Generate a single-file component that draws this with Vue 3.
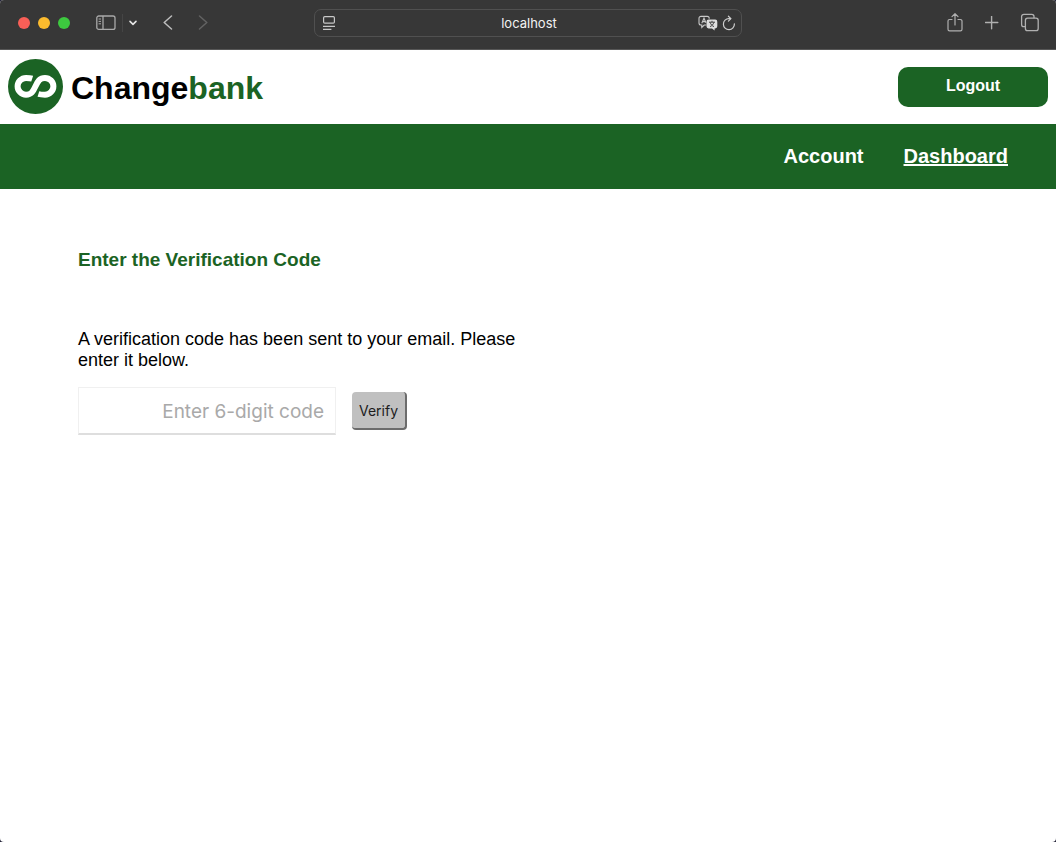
<script setup>
import { ref } from 'vue'

const code = ref('')
const links = [
  { label: 'Account', active: false },
  { label: 'Dashboard', active: true },
]
</script>

<template>
  <div class="window">
    <div class="toolbar">
      <div class="tools tools-left">
        <div class="lights">
          <span class="light close"></span>
          <span class="light minimize"></span>
          <span class="light zoom"></span>
        </div>
        <button class="icon sidebar" aria-label="Sidebar">
          <svg width="20" height="16" viewBox="0 0 20 16" fill="none" stroke="#a9a9a9" stroke-width="1.3">
            <rect x="0.8" y="1" width="18.2" height="13.4" rx="2" />
            <path d="M7 1v13.4" />
            <path d="M2.6 4h2.4M2.6 6.4h2.4M2.6 8.8h2.4" stroke-width="1" />
          </svg>
        </button>
        <span class="divider"></span>
        <button class="icon groups" aria-label="Tab groups">
          <svg width="10" height="8" viewBox="0 0 10 8" fill="none" stroke="#e4e4e4" stroke-width="1.6" stroke-linecap="round" stroke-linejoin="round">
            <path d="M2 2.4l3 3 3-3" />
          </svg>
        </button>
        <button class="icon back" aria-label="Back">
          <svg width="12" height="16" viewBox="0 0 12 16" fill="none" stroke="#bdbdbd" stroke-width="1.5" stroke-linecap="round" stroke-linejoin="round">
            <path d="M9.5 1L2.2 7.5l7.3 6.5" />
          </svg>
        </button>
        <button class="icon forward" aria-label="Forward">
          <svg width="12" height="16" viewBox="0 0 12 16" fill="none" stroke="#626262" stroke-width="1.5" stroke-linecap="round" stroke-linejoin="round">
            <path d="M2.5 1l7.3 6.5L2.5 14" />
          </svg>
        </button>
      </div>

      <div class="address">
        <svg class="reader" width="14" height="16" viewBox="0 0 14 16" fill="none" stroke="#c8c8c8" stroke-width="1.2">
          <rect x="1.6" y="1.6" width="10.8" height="6.6" rx="1.2" />
          <path d="M1 11.4h12M1 14.4h8.4" />
        </svg>
        <span class="host">localhost</span>
        <div class="address-tools">
          <svg width="20" height="16" viewBox="0 0 20 16" fill="none">
            <path d="M8.2 10H6.2l-2.4 2.4V10H3a2 2 0 0 1-2-2V3.4a2 2 0 0 1 2-2h6.2a2 2 0 0 1 2 2v.4" stroke="#c8c8c8" stroke-width="1.1" />
            <path d="M3.8 8.2L6 3.2l1.9 4.6M4.6 6.6h2.8" stroke="#c8c8c8" stroke-width="1.1" />
            <path d="M10.6 4.6h6.6a2.1 2.1 0 0 1 2.1 2.1v4.6a2.1 2.1 0 0 1-2.1 2.1h-.6v2.2l-2.6-2.2h-3.4a2.1 2.1 0 0 1-2.1-2.1V6.7a2.1 2.1 0 0 1 2.1-2.1z" fill="#dedede" />
            <path d="M11 7.2h6M14 5.8v1.4M12 11.6c2-.8 3.2-2 3.8-4.2M12.2 7.4c.6 2.2 1.8 3.4 3.8 4.2" stroke="#373737" stroke-width="0.9" />
          </svg>
          <svg width="14" height="16" viewBox="0 0 14 16" fill="none" stroke="#cfcfcf" stroke-width="1.2" stroke-linecap="round" stroke-linejoin="round">
            <path d="M12.4 8.8A5.5 5.5 0 1 1 7 3.6h1.6" />
            <path d="M6.4 1.2l2.5 2.4-2.5 2.5" />
          </svg>
        </div>
      </div>

      <div class="tools tools-right">
        <button class="icon" aria-label="Share">
          <svg width="18" height="20" viewBox="0 0 18 20" fill="none" stroke="#b0b0b0" stroke-width="1.2" stroke-linecap="round" stroke-linejoin="round">
            <path d="M6 6.5H3.6A1.6 1.6 0 0 0 2 8.1v8.2a1.6 1.6 0 0 0 1.6 1.6h10.8a1.6 1.6 0 0 0 1.6-1.6V8.1a1.6 1.6 0 0 0-1.6-1.6H12" />
            <path d="M9 12V.8M6 3.6L9 .7l3 2.9" />
          </svg>
        </button>
        <button class="icon" aria-label="New tab">
          <svg width="14" height="14" viewBox="0 0 14 14" fill="none" stroke="#b0b0b0" stroke-width="1.4" stroke-linecap="round">
            <path d="M6.6 .3v12.4M.4 6.5h12.4" />
          </svg>
        </button>
        <button class="icon" aria-label="Show tabs">
          <svg width="20" height="20" viewBox="0 0 20 20" fill="none" stroke="#b0b0b0" stroke-width="1.3">
            <rect x="5.4" y="5.2" width="12.8" height="12.4" rx="2.2" />
            <path d="M5.4 13.6H3.8a2.2 2.2 0 0 1-2.2-2.2V3.6a2.2 2.2 0 0 1 2.2-2.2h8A2.2 2.2 0 0 1 14 3.6v1.6" />
          </svg>
        </button>
      </div>
    </div>

    <header class="brand-bar">
      <a class="brand" href="#" aria-label="Changebank">
        <svg width="55" height="55" viewBox="0 0 55 55" fill="none">
          <circle cx="27.5" cy="27.5" r="27.5" fill="#1b6324" />
          <path d="M24.2 19.6C22.4 19 20.6 18.9 18 18.9a8.4 8.4 0 0 0 0 16.8c5.4 0 7-3 9.5-8.4s4.1-8.4 9.5-8.4a8.4 8.4 0 0 1 0 16.8c-2.6 0-4.6-.1-6.6-.7" stroke="#fff" stroke-width="6" />
        </svg>
        <span class="brand-name">Change<span class="accent">bank</span></span>
      </a>
      <button class="logout">Logout</button>
    </header>

    <nav class="menu">
      <a v-for="link in links" :key="link.label" href="#" :class="{ active: link.active }">{{ link.label }}</a>
    </nav>

    <main class="content">
      <h1>Enter the Verification Code</h1>
      <form class="verify-form" @submit.prevent>
        <label for="code">A verification code has been sent to your email. Please enter it below.</label>
        <div class="row">
          <input id="code" v-model="code" type="text" placeholder="Enter 6-digit code" />
          <button class="verify" type="submit">Verify</button>
        </div>
      </form>
    </main>
  </div>
</template>

<style>
body {
  margin: 0;
  background: #25253a;
}
</style>

<style scoped>
.window {
  min-height: 100vh;
  overflow: hidden;
  border-radius: 4px;
  background: #fff;
  color: #000;
  font-family: "Liberation Sans", Arial, sans-serif;
}

button {
  font-family: inherit;
  cursor: pointer;
}

svg {
  display: block;
}

.toolbar {
  display: grid;
  grid-template-columns: 1fr minmax(0, 428px) 1fr;
  align-items: center;
  box-sizing: border-box;
  height: 50px;
  padding: 0 16px 4px;
  border-bottom: 1px solid #575757;
  background: #373737;
}

.tools {
  display: flex;
  align-items: center;
}

.tools-right {
  justify-content: flex-end;
  gap: 21px;
}

.icon {
  padding: 0;
  border: 0;
  background: none;
}

.lights {
  display: flex;
  gap: 8px;
  margin-left: 2px;
}

.light {
  width: 12px;
  height: 12px;
  border-radius: 50%;
}

.close {
  background: #f95f57;
}

.minimize {
  background: #fcbb2e;
}

.zoom {
  background: #3dc93f;
}

.sidebar {
  margin-left: 26px;
}

.divider {
  width: 1px;
  height: 18px;
  margin-left: 6px;
  background: #454545;
}

.groups {
  margin-left: 5px;
}

.back {
  margin-left: 24px;
}

.forward {
  margin-left: 23px;
}

.address {
  display: flex;
  align-items: center;
  justify-content: space-between;
  box-sizing: border-box;
  height: 28px;
  padding: 0 5px 0 7px;
  border: 1px solid #505050;
  border-radius: 7px;
}

.reader {
  margin-right: 24px;
}

.host {
  color: #f2f2f2;
  font: 13px/16px Inter, sans-serif;
}

.address-tools {
  display: flex;
  gap: 4px;
}

.brand-bar {
  display: flex;
  align-items: center;
  justify-content: space-between;
  height: 74px;
  padding: 0 8px;
}

.brand {
  display: flex;
  align-items: flex-start;
  gap: 8px;
  padding-bottom: 2px;
  color: #000;
  text-decoration: none;
}

.brand-name {
  padding-top: 11px;
  font-size: 32px;
  font-weight: bold;
  line-height: 36px;
}

.accent {
  color: #1b6324;
}

.logout {
  width: 150px;
  height: 40px;
  padding: 0 0 2px;
  border: 0;
  border-radius: 10px;
  background: #1b6324;
  color: #fff;
  font-size: 16px;
  font-weight: bold;
}

.menu {
  display: flex;
  align-items: center;
  justify-content: flex-end;
  gap: 40px;
  box-sizing: border-box;
  height: 65px;
  padding: 0 48px 2px;
  background: #1b6324;
}

.menu a {
  color: #fff;
  font-size: 20px;
  font-weight: bold;
  line-height: 24px;
  text-decoration: none;
}

.menu .active {
  text-decoration: underline;
}

.content {
  max-width: 440px;
  padding: 60px 78px;
}

h1 {
  margin: 0;
  color: #1b6324;
  font-size: 19px;
  line-height: 21px;
}

.verify-form {
  padding-top: 59px;
}

.verify-form label {
  display: block;
  font-size: 18px;
  line-height: 21px;
}

.row {
  display: flex;
  align-items: center;
  gap: 16px;
  margin-top: 16px;
}

.row input {
  box-sizing: border-box;
  width: 258px;
  height: 48px;
  padding: 2px 11px 0;
  border: 1px solid #f0f0f0;
  border-bottom: 2px solid #dedede;
  outline: 0;
  color: #000;
  font: 19px/24px Inter, sans-serif;
  text-align: right;
}

.row input::placeholder {
  color: #a9a9a9;
  opacity: 1;
}

.verify {
  height: 38px;
  padding: 2px 7px 0;
  border: 0 solid #6c6c6c;
  border-width: 0 2px 2px 0;
  border-radius: 4px;
  background: #c0c0c0;
  color: #1c1c1c;
  font: 14px/18px Inter, sans-serif;
}
</style>
